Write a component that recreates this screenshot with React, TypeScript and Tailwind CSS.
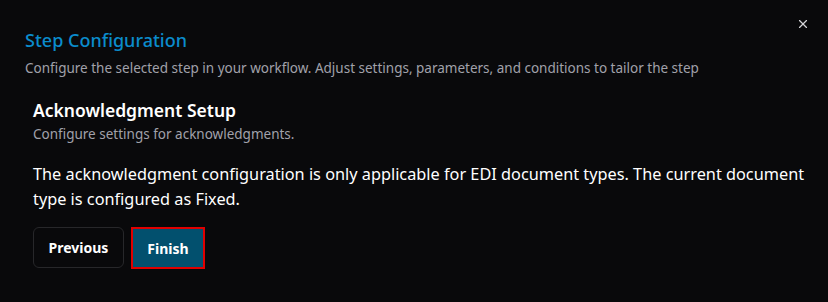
import { X } from 'lucide-react';

const App = () => {
  return (
    <div
      className="relative w-[828px] h-[302px] bg-[#09090b] text-white"
      style={{ fontFamily: '"Segoe UI", "Noto Sans", "Open Sans", sans-serif' }}
    >
      <button className="absolute right-[18px] top-[17px] text-[#d4d4d8]">
        <X size={14} strokeWidth={2} />
      </button>

      <div className="pl-[25px] pr-[6px] pt-[29px]">
        <div className="flex flex-col gap-[8px]">
          <h2 className="text-[18px] leading-[22px] font-medium text-[#0b8ccc]">Step Configuration</h2>
          <p className="text-[13.5px] leading-[18px] text-[#a1a1aa]">
            Configure the selected step in your workflow. Adjust settings, parameters, and conditions to tailor the step
          </p>
        </div>

        <div className="pl-2 pt-[21px]">
          <h3 className="text-[17.5px] leading-[24px] font-semibold text-white">Acknowledgment Setup</h3>
          <p className="mt-[3px] text-[13.5px] leading-[18px] text-[#a1a1aa]">Configure settings for acknowledgments.</p>

          <p className="mt-[19px] text-[16.3px] leading-[25px] text-white">
            The acknowledgment configuration is only applicable for EDI document types. The current document type is configured as Fixed.
          </p>

          <div className="mt-[15px] flex gap-[7px]">
            <button className="h-[41px] w-[91px] rounded-md border border-[#27272a] bg-[#09090b] text-[14px] font-bold text-white">
              Previous
            </button>
            <button className="h-[42px] w-[74px] border-2 border-[#e00000] bg-[#02506e] text-[14px] font-bold text-white">
              Finish
            </button>
          </div>
        </div>
      </div>
    </div>
  );
};

export default App;
